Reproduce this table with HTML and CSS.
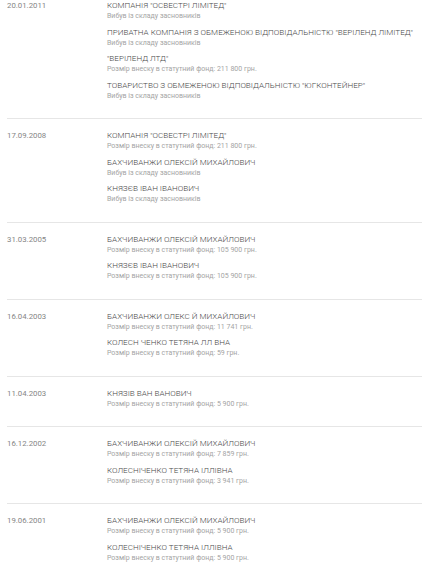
FILE: index.html
```html
<!DOCTYPE html>
<html lang="uk">
<head>
<meta charset="utf-8">
<link rel="stylesheet" href="styles.css">
</head>
<body>
<div class="history">
  <div class="row">
    <div class="date">20.01.2011</div>
    <div class="items">
      <div class="item"><div class="name">КОМПАНІЯ "ОСВЕСТРІ ЛІМІТЕД"</div><div class="note">Вибув із складу засновників</div></div>
      <div class="item"><div class="name">ПРИВАТНА КОМПАНІЯ З ОБМЕЖЕНОЮ ВІДПОВІДАЛЬНІСТЮ "ВЕРІЛЕНД ЛІМІТЕД"</div><div class="note">Вибув із складу засновників</div></div>
      <div class="item"><div class="name">"ВЕРІЛЕНД ЛТД"</div><div class="note">Розмір внеску в статутний фонд: 211 800 грн.</div></div>
      <div class="item"><div class="name">ТОВАРИСТВО З ОБМЕЖЕНОЮ ВІДПОВІДАЛЬНІСТЮ "ЮГКОНТЕЙНЕР"</div><div class="note">Вибув із складу засновників</div></div>
    </div>
  </div>
  <div class="row">
    <div class="date">17.09.2008</div>
    <div class="items">
      <div class="item"><div class="name">КОМПАНІЯ "ОСВЕСТРІ ЛІМІТЕД"</div><div class="note">Розмір внеску в статутний фонд: 211 800 грн.</div></div>
      <div class="item"><div class="name">БАХЧИВАНЖИ ОЛЕКСІЙ МИХАЙЛОВИЧ</div><div class="note">Вибув із складу засновників</div></div>
      <div class="item"><div class="name">КНЯЗЄВ ІВАН ІВАНОВИЧ</div><div class="note">Вибув із складу засновників</div></div>
    </div>
  </div>
  <div class="row">
    <div class="date">31.03.2005</div>
    <div class="items">
      <div class="item"><div class="name">БАХЧИВАНЖИ ОЛЕКСІЙ МИХАЙЛОВИЧ</div><div class="note">Розмір внеску в статутний фонд: 105 900 грн.</div></div>
      <div class="item"><div class="name">КНЯЗЄВ ІВАН ІВАНОВИЧ</div><div class="note">Розмір внеску в статутний фонд: 105 900 грн.</div></div>
    </div>
  </div>
  <div class="row">
    <div class="date">16.04.2003</div>
    <div class="items">
      <div class="item"><div class="name">БАХЧИВАНЖИ ОЛЕКС Й МИХАЙЛОВИЧ</div><div class="note">Розмір внеску в статутний фонд: 11 741 грн.</div></div>
      <div class="item"><div class="name">КОЛЕСН ЧЕНКО ТЕТЯНА ЛЛ ВНА</div><div class="note">Розмір внеску в статутний фонд: 59 грн.</div></div>
    </div>
  </div>
  <div class="row">
    <div class="date">11.04.2003</div>
    <div class="items">
      <div class="item"><div class="name">КНЯЗІВ ВАН ВАНОВИЧ</div><div class="note">Розмір внеску в статутний фонд: 5 900 грн.</div></div>
    </div>
  </div>
  <div class="row">
    <div class="date">16.12.2002</div>
    <div class="items">
      <div class="item"><div class="name">БАХЧИВАНЖИ ОЛЕКСІЙ МИХАЙЛОВИЧ</div><div class="note">Розмір внеску в статутний фонд: 7 859 грн.</div></div>
      <div class="item"><div class="name">КОЛЕСНІЧЕНКО ТЕТЯНА ІЛЛІВНА</div><div class="note">Розмір внеску в статутний фонд: 3 941 грн.</div></div>
    </div>
  </div>
  <div class="row">
    <div class="date">19.06.2001</div>
    <div class="items">
      <div class="item"><div class="name">БАХЧИВАНЖИ ОЛЕКСІЙ МИХАЙЛОВИЧ</div><div class="note">Розмір внеску в статутний фонд: 5 900 грн.</div></div>
      <div class="item"><div class="name">КОЛЕСНІЧЕНКО ТЕТЯНА ІЛЛІВНА</div><div class="note">Розмір внеску в статутний фонд: 5 900 грн.</div></div>
    </div>
  </div>
</div>
</body>
</html>
```
FILE: styles.css
```css
html, body {
  margin: 0;
  padding: 0;
  background: #ffffff;
}
body {
  font-family: Roboto, "Liberation Sans", sans-serif;
  overflow: hidden;
}
.history {
  padding-left: 7px;
  margin-top: -11px;
}
.row {
  display: flex;
  padding: 11px 0 16.5px;
  border-top: 1px solid #e6e6e6;
}
.row:first-child {
  border-top: none;
}
.date {
  width: 100px;
  flex: none;
  font-size: 7.8px;
  line-height: 11px;
  color: #858585;
}
.items {
  display: flex;
  flex-direction: column;
  gap: 4.5px;
}
.name {
  font-size: 8.1px;
  font-weight: 300;
  line-height: 11px;
  color: #4a4a4a;
  white-space: nowrap;
}
.note {
  font-size: 7px;
  line-height: 11px;
  color: #a4a4a4;
  white-space: nowrap;
}
```
